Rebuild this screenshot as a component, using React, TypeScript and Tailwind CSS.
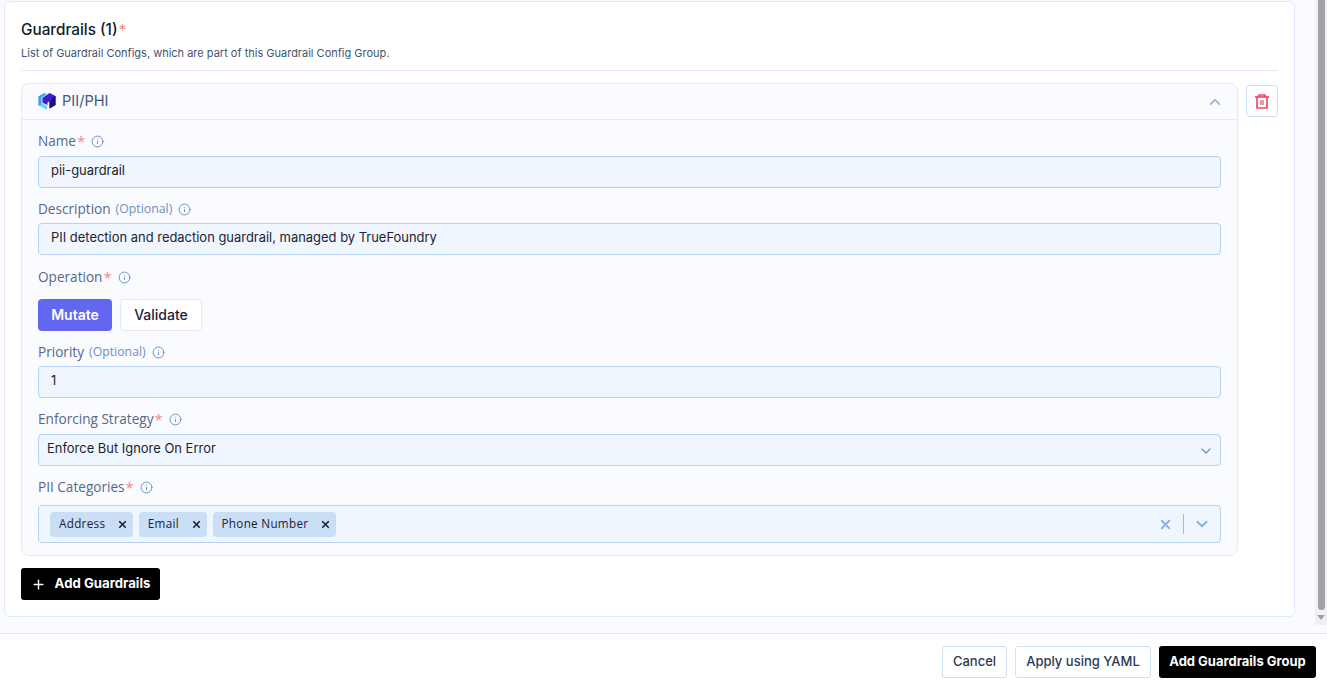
import { ChevronDown, ChevronUp, Info, Plus, X } from "lucide-react"
import type { ReactNode } from "react"

const font = "font-['Inter','Liberation_Sans',sans-serif]"
const labelFont = "font-['Open_Sans','Inter',sans-serif]"
const inputClass =
  "h-8 w-full flex items-center rounded border border-[#b5d0f0] bg-[#f0f6fe] pb-[2px] text-[12.95px] text-[#1c2333]"

function Field({
  label,
  required,
  optional,
  top = 11,
  gap = 4,
  children,
}: {
  label: string
  required?: boolean
  optional?: boolean
  top?: number
  gap?: number
  children: ReactNode
}) {
  return (
    <div style={{ marginTop: top }}>
      <div className={`h-5 flex items-center pt-px text-[13.6px] text-[#56688a] ${labelFont}`} style={{ marginBottom: gap }}>
        <span>{label}</span>
        {required && <span className="ml-px text-[15px] leading-none text-[#f28b82]">*</span>}
        {optional && <span className="ml-[5px] text-[12.3px] text-[#6f8fbc]">(Optional)</span>}
        <Info size={13} strokeWidth={1.5} className="ml-[6px] text-[#4f7bbd]" />
      </div>
      {children}
    </div>
  )
}

function Tag({ text }: { text: string }) {
  return (
    <div className={`h-[25px] flex items-center rounded bg-[#cadef6] pl-[9px] pr-[5px] text-[11.7px] tracking-[0.3px] text-[#1c2333] ${labelFont}`}>
      <span>{text}</span>
      <X size={11} strokeWidth={3.6} className="ml-[11.5px] text-[#1c2333]" />
    </div>
  )
}

function CubeLogo() {
  return (
    <svg width="18" height="18" viewBox="0 0 18 18">
      <path d="M0.5 4.5 L6.5 1 L9 2.5 L4.5 6 L4.5 11.5 L9 14 L9 17.8 L0.5 13.5 Z" fill="#7ccdf8" />
      <path d="M0.5 4.5 L6.5 1 L8 1.9 L3 5.5 L3 12.8 L0.5 13.5 Z" fill="#3f9fe8" />
      <path d="M4.5 6 L11.5 1 L17.5 4 L17.5 13 L11.5 16.5 L11.5 9.5 L9.5 10.5 L9.5 13 L4.5 10.8 Z" fill="#3b1fd0" />
      <path d="M11.5 9.5 L11.5 16.5 L17.5 13 L17.5 4 L14 6.2 L14 8.3 Z" fill="#1e0f86" />
    </svg>
  )
}

function TrashIcon() {
  return (
    <svg width="14" height="15" viewBox="0 0 14 15" fill="none" stroke="#f4476b" strokeWidth="1.7">
      <path d="M0 3h14" />
      <path d="M4 3V1h6v2" />
      <path d="M2 3v11h10V3" />
      <path d="M6 6v5M8 6v5" strokeWidth="1.2" />
    </svg>
  )
}

export default function App() {
  return (
    <div className={`h-[690px] w-[1327px] overflow-hidden flex flex-col bg-white ${font}`}>
      <div className="h-[634px] flex bg-[#fafbff] border-b border-[#e1eafa]">
        <div className="flex-1 pl-1 pt-px pr-5">
          <div className="h-[616px] rounded-md border border-[#e1eafa] bg-white px-4 pt-[17px]">
            <div className="h-[22px] flex items-center text-[15.3px] font-medium text-[#141a26]">
              Guardrails (1)
              <span className="ml-px text-[16px] font-normal leading-none text-[#f28b82]">*</span>
            </div>
            <p className="mt-[3px] mb-[8px] h-[18px] text-[11px] leading-[18px] text-[#44546f]">
              List of Guardrail Configs, which are part of this Guardrail Config Group.
            </p>
            <div className="mt-[7px] border-t border-[#e1eafa]" />

            <div className="mt-3 flex items-start gap-2">
              <div className="flex-1 rounded-lg border border-[#e1eafa] bg-[#fafbff]">
                <div className="h-9 flex items-center justify-between border-b border-[#e1eafa] pl-4 pr-[13px]">
                  <div className="flex items-center gap-[6px] text-[14.6px] text-[#42567a]">
                    <CubeLogo />
                    PII/PHI
                  </div>
                  <ChevronUp size={18} strokeWidth={2} className="text-[#8ca9d4]" />
                </div>

                <div className="px-4 pb-3">
                  <Field label="Name" required gap={5}>
                    <div className={`${inputClass} pl-3`}>pii-guardrail</div>
                  </Field>
                  <Field label="Description" optional>
                    <div className={`${inputClass} pl-3`}>PII detection and redaction guardrail, managed by TrueFoundry</div>
                  </Field>
                  <Field label="Operation" required top={12} gap={12}>
                    <div className="flex gap-2">
                      <div className="h-8 w-[74px] flex items-center justify-center rounded bg-[#6366f1] pb-[2px] text-[14px] font-semibold text-white">
                        Mutate
                      </div>
                      <div className="h-8 w-[82px] flex items-center justify-center rounded border border-[#e1eafa] bg-white pb-[2px] text-[14px] font-medium text-[#1c2333]">
                        Validate
                      </div>
                    </div>
                  </Field>
                  <Field label="Priority" optional>
                    <div className={`${inputClass} pl-3`}>1</div>
                  </Field>
                  <Field label="Enforcing Strategy" required gap={5}>
                    <div className={`${inputClass} justify-between pl-2 pr-[6px]`}>
                      Enforce But Ignore On Error
                      <ChevronDown size={16} strokeWidth={2} className="mt-[3px] text-[#6f95c9]" />
                    </div>
                  </Field>
                  <Field label="PII Categories" required gap={8}>
                    <div className="h-[38px] flex items-center justify-between rounded border border-[#b5d0f0] bg-[#f0f6fe] pl-[11px] pr-[9px]">
                      <div className="flex gap-[6px]">
                        <Tag text="Address" />
                        <Tag text="Email" />
                        <Tag text="Phone Number" />
                      </div>
                      <div className="flex items-center">
                        <X size={15} strokeWidth={3} className="text-[#8cb2e3]" />
                        <div className="ml-[10px] mr-[9px] h-5 w-px bg-[#9dbde6]" />
                        <ChevronDown size={18} strokeWidth={2.6} className="text-[#8cb2e3]" />
                      </div>
                    </div>
                  </Field>
                </div>
              </div>
              <div className="mt-[2px] h-8 w-8 flex items-center justify-center rounded-[3px] border border-[#cfdff5] bg-white">
                <TrashIcon />
              </div>
            </div>

            <button className="mt-3 h-8 w-[139px] flex items-center justify-center gap-[9px] rounded-[3px] bg-black text-[13.2px] font-bold text-white">
              <Plus size={15} strokeWidth={2.2} />
              Add Guardrails
            </button>
          </div>
        </div>

        <div className="w-3 h-[625px] flex flex-col items-center bg-[#f1f1f4]">
          <div className="h-[610px] w-[7px] rounded-b-full bg-[#a1a1aa]" />
          <div className="mt-[5px] h-0 w-0 border-x-[4px] border-t-[5px] border-x-transparent border-t-[#a1a1aa]" />
        </div>
      </div>

      <div className="flex-1 flex items-start justify-end gap-2 pt-[12px] pr-[11px]">
        <button className="h-8 w-[65px] rounded-[3px] border border-[#cfdff5] bg-white text-[13px] font-medium text-[#2a3a55]">
          Cancel
        </button>
        <button className="h-8 w-[136px] rounded-[3px] border border-[#cfdff5] bg-white text-[13px] font-medium text-[#2a3a55]">
          Apply using YAML
        </button>
        <button className="h-8 w-[157px] rounded-[3px] bg-black text-[13px] font-bold text-white">
          Add Guardrails Group
        </button>
      </div>
    </div>
  )
}
